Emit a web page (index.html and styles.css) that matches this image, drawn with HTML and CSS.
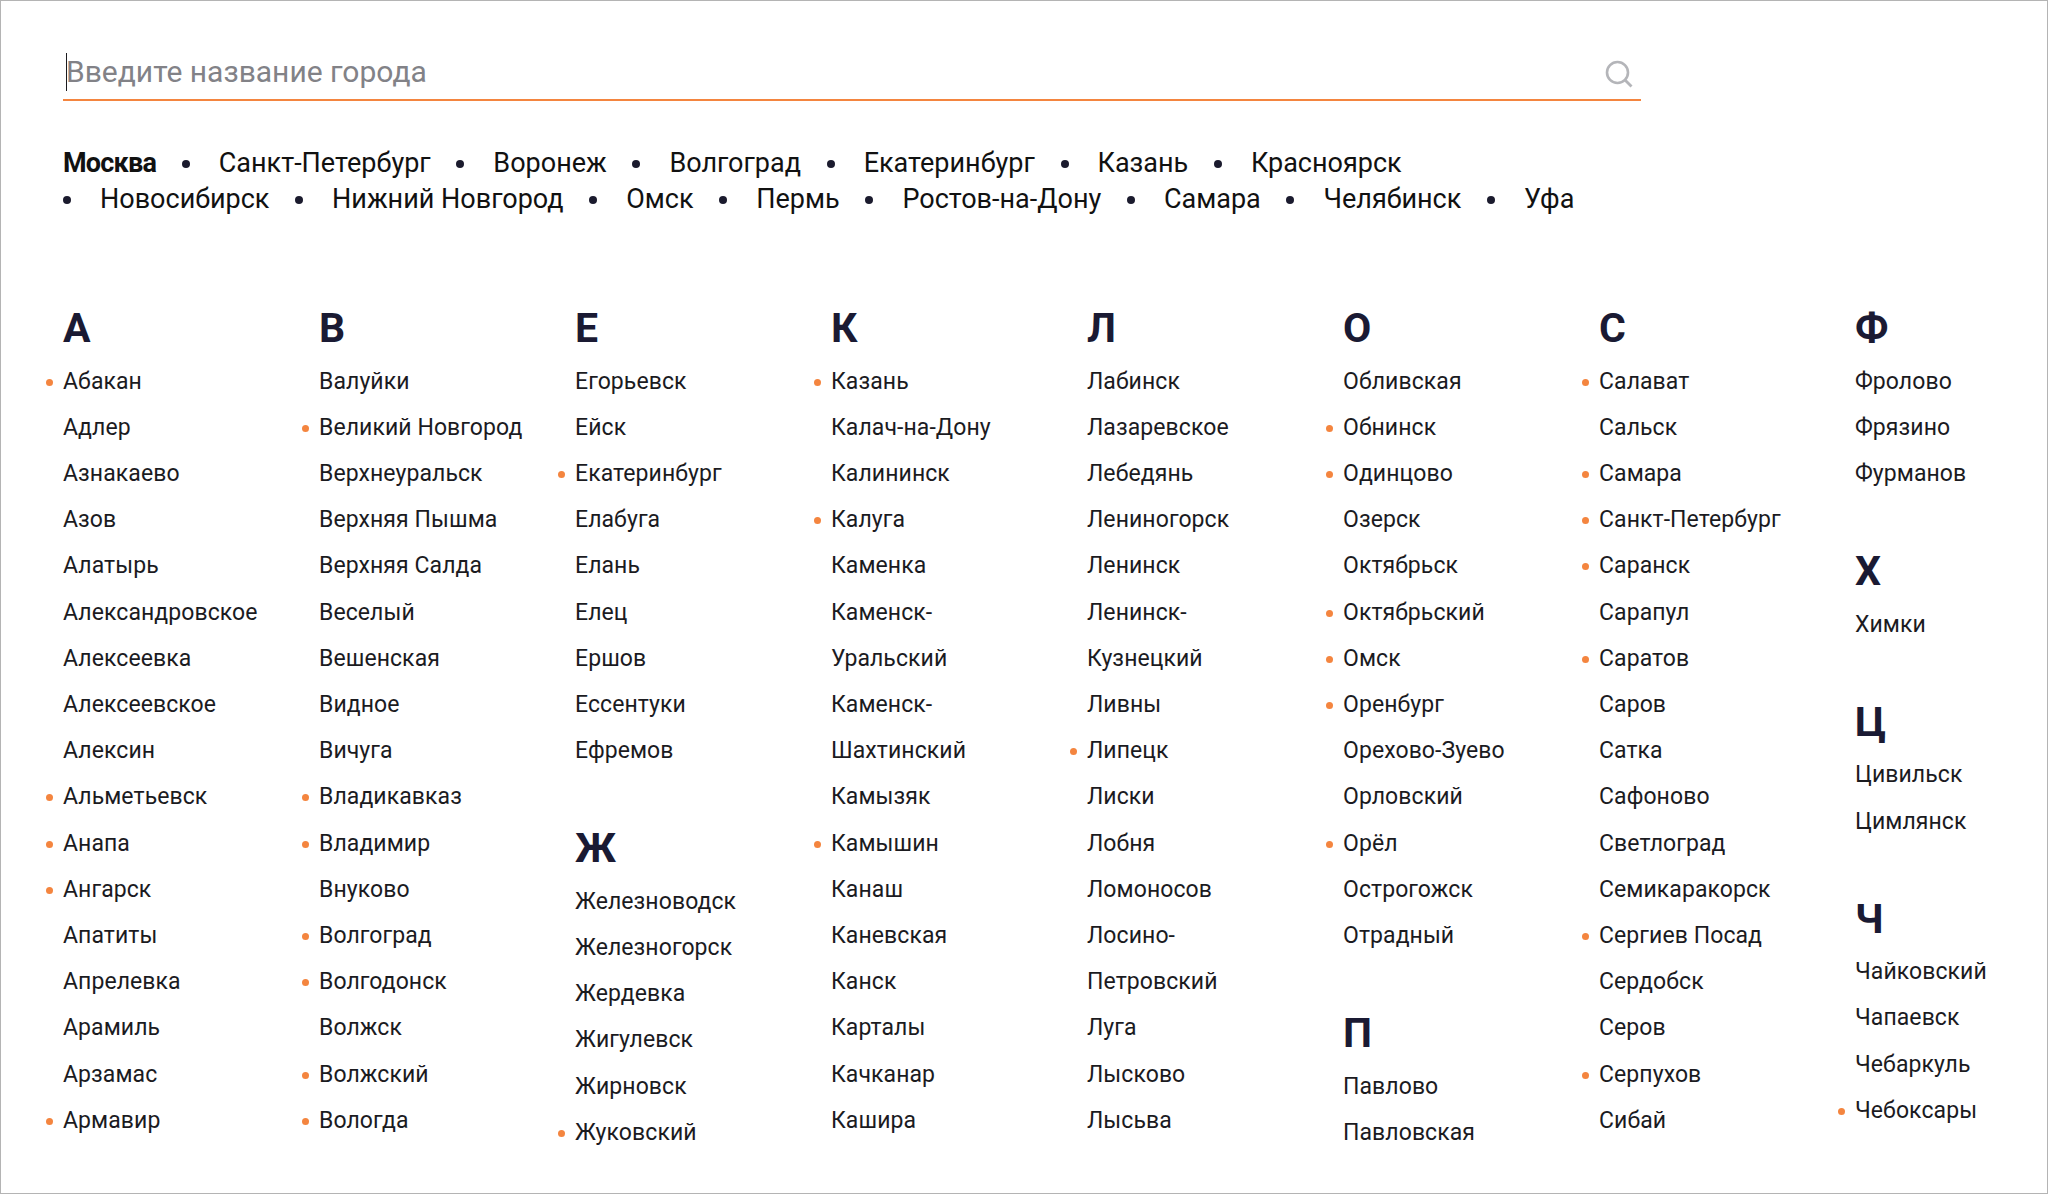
FILE: index.html
```html
<!DOCTYPE html>
<html lang="ru">
<head>
    <meta charset="UTF-8">
    <title>Выбор города</title>
    <link rel="stylesheet" href="styles.css">
</head>
<body>
    <div class="search">
        <span class="caret"></span>
        <input class="search-input" type="text" placeholder="Введите название города">
        <svg class="search-icon" width="28" height="28" viewBox="0 0 28 28" fill="none">
            <circle cx="12.5" cy="12.5" r="10.5" stroke="#b4b5b9" stroke-width="2.6"/>
            <path d="M20 20l6.5 6.5" stroke="#b4b5b9" stroke-width="2.8"/>
        </svg>
    </div>

    <ul class="top-cities">
        <li class="top-city first">Москва</li>
        <li class="top-city">Санкт-Петербург</li>
        <li class="top-city">Воронеж</li>
        <li class="top-city">Волгоград</li>
        <li class="top-city">Екатеринбург</li>
        <li class="top-city">Казань</li>
        <li class="top-city">Красноярск</li>
        <li class="top-city">Новосибирск</li>
        <li class="top-city">Нижний Новгород</li>
        <li class="top-city">Омск</li>
        <li class="top-city">Пермь</li>
        <li class="top-city">Ростов-на-Дону</li>
        <li class="top-city">Самара</li>
        <li class="top-city">Челябинск</li>
        <li class="top-city">Уфа</li>
    </ul>

    <div class="columns">
        <div class="column">
            <h3 class="letter">А</h3>
            <ul class="cities">
                <li class="big">Абакан</li>
                <li>Адлер</li>
                <li>Азнакаево</li>
                <li>Азов</li>
                <li>Алатырь</li>
                <li>Александровское</li>
                <li>Алексеевка</li>
                <li>Алексеевское</li>
                <li>Алексин</li>
                <li class="big">Альметьевск</li>
                <li class="big">Анапа</li>
                <li class="big">Ангарск</li>
                <li>Апатиты</li>
                <li>Апрелевка</li>
                <li>Арамиль</li>
                <li>Арзамас</li>
                <li class="big">Армавир</li>
            </ul>
        </div>

        <div class="column">
            <h3 class="letter">В</h3>
            <ul class="cities">
                <li>Валуйки</li>
                <li class="big">Великий Новгород</li>
                <li>Верхнеуральск</li>
                <li>Верхняя Пышма</li>
                <li>Верхняя Салда</li>
                <li>Веселый</li>
                <li>Вешенская</li>
                <li>Видное</li>
                <li>Вичуга</li>
                <li class="big">Владикавказ</li>
                <li class="big">Владимир</li>
                <li>Внуково</li>
                <li class="big">Волгоград</li>
                <li class="big">Волгодонск</li>
                <li>Волжск</li>
                <li class="big">Волжский</li>
                <li class="big">Вологда</li>
            </ul>
        </div>

        <div class="column">
            <h3 class="letter">Е</h3>
            <ul class="cities">
                <li>Егорьевск</li>
                <li>Ейск</li>
                <li class="big">Екатеринбург</li>
                <li>Елабуга</li>
                <li>Елань</li>
                <li>Елец</li>
                <li>Ершов</li>
                <li>Ессентуки</li>
                <li>Ефремов</li>
            </ul>
            <h3 class="letter">Ж</h3>
            <ul class="cities">
                <li>Железноводск</li>
                <li>Железногорск</li>
                <li>Жердевка</li>
                <li>Жигулевск</li>
                <li>Жирновск</li>
                <li class="big">Жуковский</li>
            </ul>
        </div>

        <div class="column">
            <h3 class="letter">К</h3>
            <ul class="cities">
                <li class="big">Казань</li>
                <li>Калач-на-Дону</li>
                <li>Калининск</li>
                <li class="big">Калуга</li>
                <li>Каменка</li>
                <li>Каменск-Уральский</li>
                <li>Каменск-Шахтинский</li>
                <li>Камызяк</li>
                <li class="big">Камышин</li>
                <li>Канаш</li>
                <li>Каневская</li>
                <li>Канск</li>
                <li>Карталы</li>
                <li>Качканар</li>
                <li>Кашира</li>
            </ul>
        </div>

        <div class="column">
            <h3 class="letter">Л</h3>
            <ul class="cities">
                <li>Лабинск</li>
                <li>Лазаревское</li>
                <li>Лебедянь</li>
                <li>Лениногорск</li>
                <li>Ленинск</li>
                <li>Ленинск-Кузнецкий</li>
                <li>Ливны</li>
                <li class="big">Липецк</li>
                <li>Лиски</li>
                <li>Лобня</li>
                <li>Ломоносов</li>
                <li>Лосино-Петровский</li>
                <li>Луга</li>
                <li>Лысково</li>
                <li>Лысьва</li>
            </ul>
        </div>

        <div class="column">
            <h3 class="letter">О</h3>
            <ul class="cities">
                <li>Обливская</li>
                <li class="big">Обнинск</li>
                <li class="big">Одинцово</li>
                <li>Озерск</li>
                <li>Октябрьск</li>
                <li class="big">Октябрьский</li>
                <li class="big">Омск</li>
                <li class="big">Оренбург</li>
                <li>Орехово-Зуево</li>
                <li>Орловский</li>
                <li class="big">Орёл</li>
                <li>Острогожск</li>
                <li>Отрадный</li>
            </ul>
            <h3 class="letter">П</h3>
            <ul class="cities">
                <li>Павлово</li>
                <li>Павловская</li>
            </ul>
        </div>

        <div class="column">
            <h3 class="letter">С</h3>
            <ul class="cities">
                <li class="big">Салават</li>
                <li>Сальск</li>
                <li class="big">Самара</li>
                <li class="big">Санкт-Петербург</li>
                <li class="big">Саранск</li>
                <li>Сарапул</li>
                <li class="big">Саратов</li>
                <li>Саров</li>
                <li>Сатка</li>
                <li>Сафоново</li>
                <li>Светлоград</li>
                <li>Семикаракорск</li>
                <li class="big">Сергиев Посад</li>
                <li>Сердобск</li>
                <li>Серов</li>
                <li class="big">Серпухов</li>
                <li>Сибай</li>
            </ul>
        </div>

        <div class="column">
            <h3 class="letter">Ф</h3>
            <ul class="cities">
                <li>Фролово</li>
                <li>Фрязино</li>
                <li>Фурманов</li>
            </ul>
            <h3 class="letter">Х</h3>
            <ul class="cities">
                <li>Химки</li>
            </ul>
            <h3 class="letter">Ц</h3>
            <ul class="cities">
                <li>Цивильск</li>
                <li>Цимлянск</li>
            </ul>
            <h3 class="letter">Ч</h3>
            <ul class="cities">
                <li>Чайковский</li>
                <li>Чапаевск</li>
                <li>Чебаркуль</li>
                <li class="big">Чебоксары</li>
            </ul>
        </div>
    </div>
</body>
</html>
```

FILE: styles.css
```css
* {
    box-sizing: border-box;
}

body {
    font-family: Roboto, "Liberation Sans", sans-serif;
    margin: 0;
    padding: 50px 62px 0;
    height: 1194px;
    overflow: hidden;
    background-color: white;
    border: 1px solid #b4b4b4;
    color: #1b1b1f;
}

ul {
    list-style: none;
    margin: 0;
    padding: 0;
}

.search {
    position: relative;
    width: 1578px;
    height: 50px;
    border-bottom: 2px solid #f4853f;
}

.caret {
    position: absolute;
    left: 3px;
    top: 2px;
    width: 1px;
    height: 38px;
    background-color: #1b1b1f;
}

.search-input {
    width: 100%;
    height: 40px;
    border: none;
    outline: none;
    padding: 0 0 0 3px;
    font-family: inherit;
    font-size: 30px;
    background: transparent;
}

.search-input::placeholder {
    color: #828287;
    opacity: 1;
}

.search-icon {
    position: absolute;
    right: 8px;
    top: 9px;
}

.top-cities {
    display: flex;
    flex-wrap: wrap;
    width: 1578px;
    margin-top: 44px;
    font-size: 27px;
    line-height: 36px;
    color: #111;
}

.top-city {
    position: relative;
    margin-right: 25.7px;
    padding-left: 37px;
}

.top-city::before {
    content: "";
    position: absolute;
    left: 0;
    top: 15px;
    width: 8px;
    height: 8px;
    border-radius: 50%;
    background-color: #1b1b2e;
}

.top-city.first {
    padding-left: 0;
    font-weight: 700;
    letter-spacing: -0.8px;
}

.top-city.first::before {
    display: none;
}

.columns {
    display: flex;
    margin-top: 37px;
}

.column {
    flex: 0 0 256px;
}

.letter {
    margin: 52px 0 8.5px;
    height: 44px;
    font-size: 41px;
    font-weight: 700;
    line-height: 44px;
    color: #1a1a33;
}

.cities li {
    position: relative;
    width: 214px;
    font-size: 23px;
    letter-spacing: 0.08px;
    line-height: 46.2px;
}

.cities li.big::before {
    content: "";
    position: absolute;
    left: -17px;
    top: 20px;
    width: 7px;
    height: 7px;
    border-radius: 50%;
    background-color: #f4853f;
}
```
